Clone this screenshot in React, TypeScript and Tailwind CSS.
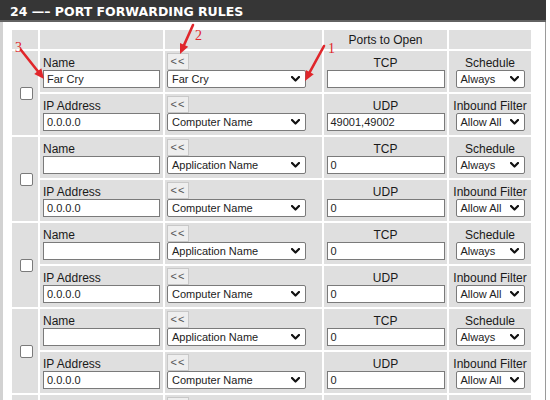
import React from "react";

type Rule = {
  name: string;
  app: string;
  tcp: string;
  udp: string;
  ip: string;
  comp: string;
};

const rules: Rule[] = [
  { name: "Far Cry", app: "Far Cry", tcp: "", udp: "49001,49002", ip: "0.0.0.0", comp: "Computer Name" },
  { name: "", app: "Application Name", tcp: "0", udp: "0", ip: "0.0.0.0", comp: "Computer Name" },
  { name: "", app: "Application Name", tcp: "0", udp: "0", ip: "0.0.0.0", comp: "Computer Name" },
  { name: "", app: "Application Name", tcp: "0", udp: "0", ip: "0.0.0.0", comp: "Computer Name" },
];

const Chevron = () => (
  <svg width="9" height="6" viewBox="0 0 9 6">
    <path d="M1 1 L4.5 4.5 L8 1" stroke="#111" strokeWidth="2.2" fill="none" strokeLinecap="round" strokeLinejoin="round" />
  </svg>
);

const Select = ({ value, w }: { value: string; w: string }) => (
  <div
    className={`${w} h-[18px] border border-[#7a7a7a] rounded-[2px] bg-white flex items-center justify-between pl-[4px] pr-[5px] text-[11px] text-[#222] leading-none`}
  >
    <span>{value}</span>
    <Chevron />
  </div>
);

const Input = ({ value, w }: { value: string; w: string }) => (
  <div
    className={`${w} h-[18px] border border-[#7a7a7a] bg-white flex items-center pl-[3px] text-[11px] text-[#222] leading-none`}
  >
    {value}
  </div>
);

const Label = ({ children }: { children: React.ReactNode }) => (
  <div className="text-[12px] leading-[14px] text-[#1a1a1a]">{children}</div>
);

const Btn = () => (
  <div className="w-[22px] h-[17px] bg-[#eeeeee] border border-[#c8c8c8] flex items-center justify-center text-[11px] text-[#555] tracking-[1px] leading-none">
    &lt;&lt;
  </div>
);

const cell = "bg-[#dfdfdf] h-[41px]";

function Arrow({ x1, y1, x2, y2 }: { x1: number; y1: number; x2: number; y2: number }) {
  const dx = x2 - x1;
  const dy = y2 - y1;
  const len = Math.sqrt(dx * dx + dy * dy);
  const ux = dx / len;
  const uy = dy / len;
  const hl = 10;
  const hw = 4.5;
  const bx = x2 - ux * hl;
  const by = y2 - uy * hl;
  const px = -uy;
  const py = ux;
  const pts = `${x2},${y2} ${bx + px * hw},${by + py * hw} ${bx - px * hw},${by - py * hw}`;
  return (
    <g>
      <line x1={x1} y1={y1} x2={bx + ux * 2} y2={by + uy * 2} stroke="#e0262b" strokeWidth="2.6" strokeLinecap="round" />
      <polygon points={pts} fill="#e0262b" />
    </g>
  );
}

export default function App() {
  return (
    <div className="w-[550px] h-[400px] bg-white relative overflow-hidden font-['Liberation_Sans',Arial,sans-serif]">
      <div className="w-[546px] h-[22px] bg-[#363636] border-b-2 border-[#626262] pl-[10px] pt-[4px] box-border">
        <div className="font-['DejaVu_Sans',sans-serif] font-bold text-[12.5px] leading-[16px] text-white whitespace-nowrap">
          24 —– PORT FORWARDING RULES
        </div>
      </div>
      <div className="w-[546px] h-[378px] border-l-[3px] border-l-[#d2d2d2] border-r border-r-[#9a9a9a] pt-[8px] pl-[9px] box-border">
        <div className="grid grid-cols-[26px_123px_157px_123px_82px] gap-[2px] w-max">
          <div className="bg-[#dfdfdf] h-[19px]" />
          <div className="bg-[#dfdfdf] h-[19px]" />
          <div className="bg-[#dfdfdf] h-[19px]" />
          <div className="bg-[#dfdfdf] h-[19px] flex items-center justify-center text-[12px] text-[#1a1a1a]">
            Ports to Open
          </div>
          <div className="bg-[#dfdfdf] h-[19px]" />
          {rules.map((r, i) => (
            <React.Fragment key={i}>
              <div className="row-span-2 bg-[#dfdfdf] flex items-center justify-center pl-[2px]">
                <div className="w-[13px] h-[13px] bg-white border border-[#7a7a7a] rounded-[2px]" />
              </div>
              <div className={`${cell} flex flex-col justify-end pb-[4px] pl-[3px]`}>
                <Label>Name</Label>
                <Input value={r.name} w="w-[117px]" />
              </div>
              <div className={`${cell} flex flex-col justify-end pb-[4px] pl-[2px]`}>
                <Btn />
                <Select value={r.app} w="w-[139px]" />
              </div>
              <div className={`${cell} flex flex-col justify-end items-center pb-[4px]`}>
                <Label>TCP</Label>
                <Input value={r.tcp} w="w-[118px]" />
              </div>
              <div className={`${cell} flex flex-col justify-end items-center pb-[4px]`}>
                <Label>Schedule</Label>
                <Select value="Always" w="w-[69px]" />
              </div>
              <div className={`${cell} flex flex-col justify-end pb-[4px] pl-[3px]`}>
                <Label>IP Address</Label>
                <Input value={r.ip} w="w-[117px]" />
              </div>
              <div className={`${cell} flex flex-col justify-end pb-[4px] pl-[2px]`}>
                <Btn />
                <Select value={r.comp} w="w-[139px]" />
              </div>
              <div className={`${cell} flex flex-col justify-end items-center pb-[4px]`}>
                <Label>UDP</Label>
                <Input value={r.udp} w="w-[118px]" />
              </div>
              <div className={`${cell} flex flex-col justify-end items-center pb-[4px]`}>
                <Label>Inbound Filter</Label>
                <Select value="Allow All" w="w-[69px]" />
              </div>
            </React.Fragment>
          ))}
          <div className={cell} />
          <div className={cell} />
          <div className={`${cell} pt-[2px] pl-[2px]`}>
            <div className="w-[22px] h-[17px] bg-[#eeeeee] border border-[#c8c8c8]" />
          </div>
          <div className={cell} />
          <div className={cell} />
        </div>
      </div>
      <svg className="absolute left-0 top-0 pointer-events-none" width="550" height="400" viewBox="0 0 550 400">
        <Arrow x1={324} y1={46} x2={305} y2={81} />
        <Arrow x1={193} y1={25} x2={180} y2={54} />
        <Arrow x1={21} y1={50} x2={44} y2={79} />
        <text x="328" y="53" fill="#e0262b" fontSize="14" fontFamily="Liberation Serif, serif">1</text>
        <text x="195" y="40" fill="#e0262b" fontSize="14" fontFamily="Liberation Serif, serif">2</text>
        <text x="15" y="52" fill="#e0262b" fontSize="14" fontFamily="Liberation Serif, serif">3</text>
      </svg>
    </div>
  );
}
